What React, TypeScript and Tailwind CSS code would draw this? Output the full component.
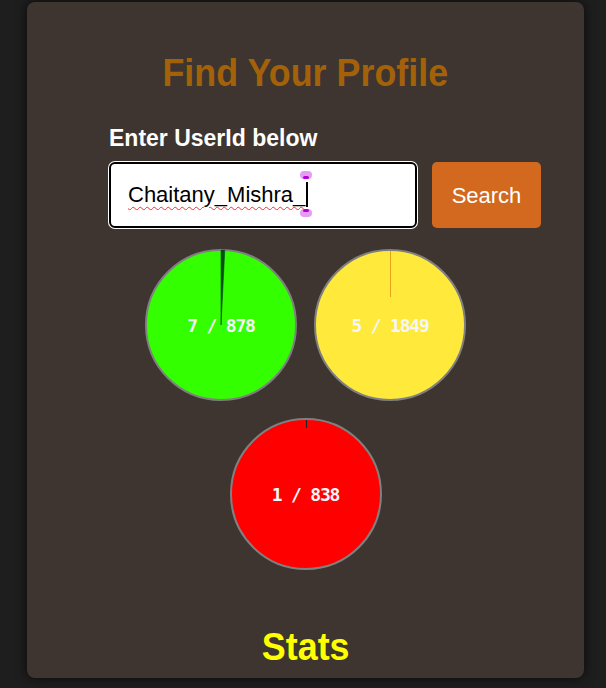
type PieProps = { done: number; total: number; color: string; slice: string; mark?: number };

// mark: length of the thin slice line when the wedge is too small to show as a wedge
const Pie = ({ done, total, color, slice, mark }: PieProps) => {
  const r = 75;
  const a = (done / total) * Math.PI * 2;
  const x = 76 + r * Math.sin(a);
  const y = 76 - r * Math.cos(a);
  return (
    <div className="relative w-[152px] h-[152px]">
      <svg width="152" height="152" viewBox="0 0 152 152" className="block">
        <circle cx="76" cy="76" r="75" fill={color} stroke="#808080" strokeWidth="2" />
        {mark ? (
          <line x1="76.5" y1="2" x2="76.5" y2={2 + mark} stroke={slice} strokeWidth="1" />
        ) : (
          <path d={`M76 76 L76 1 A75 75 0 0 1 ${x} ${y} Z`} fill={slice} stroke={slice} strokeWidth="0.6" />
        )}
      </svg>
      <div className="absolute inset-0 flex items-center justify-center text-[#f4f6f8] font-bold text-[18px] tracking-[-1.2px] font-['DejaVu_Sans_Mono',monospace]">
        {done} / {total}
      </div>
    </div>
  );
};

const App = () => {
  return (
    <div className="min-h-[688px] bg-[#1e1e1e] pt-[2px]">
      <div className="ml-[27px] w-[557px] h-[676px] bg-[#3e3530] rounded-lg shadow-[0_0_12px_rgba(0,0,0,0.7)] flex flex-col">
        <h1 className="mt-[48px] self-center scale-x-[0.92] text-[39px] leading-[46px] font-bold text-[#a3620a] font-['Liberation_Sans',sans-serif]">
          Find Your Profile
        </h1>
        <div className="ml-[82px] mt-[28px]">
          <label className="block text-[23px] leading-[28px] font-bold text-white font-['Liberation_Sans',sans-serif]">
            Enter UserId below
          </label>
          <div className="flex gap-[15px] mt-[10px]">
            <div className="relative w-[308px] h-[66px] bg-white rounded-[6px] border-2 border-black ring-1 ring-white flex items-center pl-[17px] pb-[2px]">
              <span className="text-[22px] text-black font-['Liberation_Sans',sans-serif] underline decoration-wavy decoration-red-500 decoration-1 underline-offset-4">
                Chaitany_Mishra_
              </span>
              <span className="absolute left-[195px] top-[18px] w-[2px] h-[25px] bg-black" />
              <span className="absolute left-[189px] top-[7px] w-[12px] h-[8px] rounded-full bg-[#e69cf4] flex items-end justify-center">
                <span className="w-[6px] h-[3px] rounded-full bg-[#b400d6]" />
              </span>
              <span className="absolute left-[189px] top-[45px] w-[12px] h-[8px] rounded-full bg-[#e69cf4] flex items-start justify-center">
                <span className="w-[6px] h-[3px] rounded-full bg-[#b400d6]" />
              </span>
            </div>
            <button className="w-[109px] h-[66px] bg-[#d2691e] rounded-[5px] text-white text-[22px] font-['Liberation_Sans',sans-serif]">
              Search
            </button>
          </div>
        </div>
        <div className="self-center w-[340px] mt-[21px] flex flex-wrap justify-center gap-[17px]">
          <Pie done={7} total={878} color="#33ff00" slice="#004d1a" />
          <Pie done={5} total={1849} color="#ffea3b" slice="#e8a317" mark={46} />
          <Pie done={1} total={838} color="#ff0000" slice="#222222" mark={8} />
        </div>
        <h2 className="mt-[54px] self-center scale-x-[0.92] text-[39px] leading-[46px] font-bold text-[#ffff00] font-['Liberation_Sans',sans-serif]">
          Stats
        </h2>
      </div>
    </div>
  );
};

export default App;
